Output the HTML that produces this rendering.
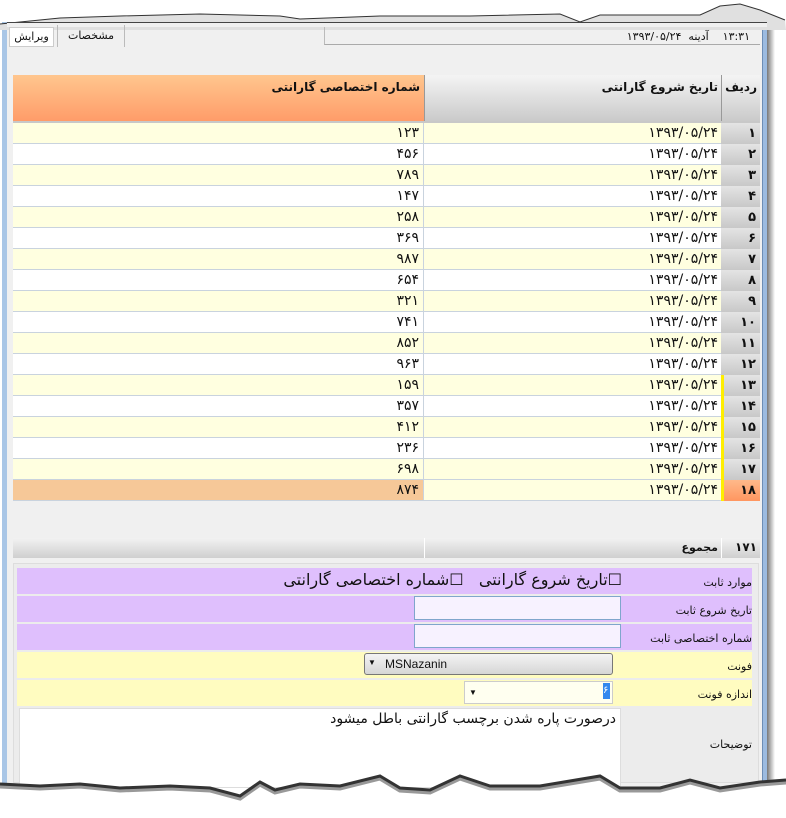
<!DOCTYPE html>
<html><head><meta charset="utf-8"><style>
*{margin:0;padding:0;box-sizing:border-box}
body{width:786px;height:818px;background:#fff;position:relative;overflow:hidden;font-family:"Liberation Sans","Noto Sans CJK SC",sans-serif;color:#111}
.a{position:absolute}
.fa{font-family:"DejaVu Sans","Noto Sans CJK SC",sans-serif;direction:rtl}
.r{position:absolute;left:13px;width:747px;height:21px;border-bottom:1px solid #c9d3de}
.c1{position:absolute;left:0;width:411px;height:20px;text-align:right;padding-right:4px;font-size:14px;line-height:21px;border-right:1px solid #c9d3de}
.c2{position:absolute;left:412px;width:296px;height:20px;text-align:right;padding-right:3px;font-size:14px;line-height:21px}
.c3{position:absolute;left:708px;width:39px;height:21px;background:linear-gradient(#e4e4e4,#c8c8c8);text-align:right;padding-right:4px;font-weight:bold;font-size:13px;line-height:21px}
.lbl{position:absolute;right:34px;font-size:11px;text-align:right}
</style></head><body>
<div class="a" style="left:2px;top:22px;width:5px;height:765px;background:#a9c6e6"></div>
<div class="a" style="left:762px;top:22px;width:5px;height:765px;background:#9cbbe0;border-left:1px solid #6c8db5"></div>
<div class="a" style="left:767px;top:30px;width:8px;height:760px;background:linear-gradient(90deg,#777,#fff)"></div>
<div class="a" style="left:7px;top:22px;width:755px;height:765px;background:#f0f0f0"></div>
<svg class="a" style="left:0;top:0" width="786" height="30"><path d="M0 24 L60 18 L120 16 L200 14 L280 16 L300 19 L380 16 L470 16 L560 14 L580 22 L600 15 L650 15 L700 15 L720 6 L740 4 L760 10 L785 20 L786 30 L0 30Z" fill="#e0e0e0"/><path d="M0 24 L60 18 L120 16 L200 14 L280 16 L300 19 L380 16 L470 16 L560 14 L580 22 L600 15 L650 15 L700 15 L720 6 L740 4 L760 10 L785 20" fill="none" stroke="#333" stroke-width="1"/></svg>
<div class="a" style="left:7px;top:22px;width:760px;height:5px;background:#f0f0f0;border-top:1px solid #444"></div>
<div class="a fa" style="left:9px;top:27px;width:45px;height:20px;background:#fff;border:1px solid #ccc;font-size:11px;text-align:center;line-height:18px">ویرایش</div>
<div class="a fa" style="left:57px;top:25px;width:68px;height:22px;border-left:1px solid #bbb;border-right:1px solid #bbb;font-size:11px;text-align:center;line-height:22px">مشخصات</div>
<div class="a" style="left:324px;top:27px;width:436px;height:18px;border-left:1px solid #bbb;border-bottom:1px solid #aaa"></div>
<div class="a fa" style="left:560px;top:30px;width:190px;font-size:11px;text-align:right;white-space:nowrap">۱۳:۳۱&nbsp;&nbsp;&nbsp; آدینه &nbsp;۱۳۹۳/۰۵/۲۴</div>
<div class="a" style="left:13px;top:75px;width:411px;height:47px;background:linear-gradient(#ffc68e,#ff9b68)"></div>
<div class="a" style="left:424px;top:75px;width:297px;height:47px;background:linear-gradient(#f4f4f4,#c9c9c9);border-left:1px solid #999"></div>
<div class="a" style="left:721px;top:75px;width:39px;height:47px;background:linear-gradient(#f4f4f4,#c9c9c9);border-left:1px solid #999"></div>
<div class="a" style="left:13px;top:121px;width:747px;height:2px;background:#c8c8c8"></div>
<div class="a fa" style="left:200px;top:80px;width:220px;font-size:12px;font-weight:bold;text-align:right">شماره اختصاصی گارانتی</div>
<div class="a fa" style="left:500px;top:80px;width:218px;font-size:12px;font-weight:bold;text-align:right">تاریخ شروع گارانتی</div>
<div class="a fa" style="left:724px;top:80px;width:33px;font-size:12px;font-weight:bold;text-align:right">ردیف</div>
<div class="a fa" style="left:0;top:0;direction:ltr">
<div class="r" style="top:123px;background:#ffffe0"><div class="c1">۱۲۳</div><div class="c2">۱۳۹۳/۰۵/۲۴</div><div class="c3">۱</div></div>
<div class="r" style="top:144px;background:#fff"><div class="c1">۴۵۶</div><div class="c2">۱۳۹۳/۰۵/۲۴</div><div class="c3">۲</div></div>
<div class="r" style="top:165px;background:#ffffe0"><div class="c1">۷۸۹</div><div class="c2">۱۳۹۳/۰۵/۲۴</div><div class="c3">۳</div></div>
<div class="r" style="top:186px;background:#fff"><div class="c1">۱۴۷</div><div class="c2">۱۳۹۳/۰۵/۲۴</div><div class="c3">۴</div></div>
<div class="r" style="top:207px;background:#ffffe0"><div class="c1">۲۵۸</div><div class="c2">۱۳۹۳/۰۵/۲۴</div><div class="c3">۵</div></div>
<div class="r" style="top:228px;background:#fff"><div class="c1">۳۶۹</div><div class="c2">۱۳۹۳/۰۵/۲۴</div><div class="c3">۶</div></div>
<div class="r" style="top:249px;background:#ffffe0"><div class="c1">۹۸۷</div><div class="c2">۱۳۹۳/۰۵/۲۴</div><div class="c3">۷</div></div>
<div class="r" style="top:270px;background:#fff"><div class="c1">۶۵۴</div><div class="c2">۱۳۹۳/۰۵/۲۴</div><div class="c3">۸</div></div>
<div class="r" style="top:291px;background:#ffffe0"><div class="c1">۳۲۱</div><div class="c2">۱۳۹۳/۰۵/۲۴</div><div class="c3">۹</div></div>
<div class="r" style="top:312px;background:#fff"><div class="c1">۷۴۱</div><div class="c2">۱۳۹۳/۰۵/۲۴</div><div class="c3">۱۰</div></div>
<div class="r" style="top:333px;background:#ffffe0"><div class="c1">۸۵۲</div><div class="c2">۱۳۹۳/۰۵/۲۴</div><div class="c3">۱۱</div></div>
<div class="r" style="top:354px;background:#fff"><div class="c1">۹۶۳</div><div class="c2">۱۳۹۳/۰۵/۲۴</div><div class="c3">۱۲</div></div>
<div class="r" style="top:375px;background:#ffffe0"><div class="c1">۱۵۹</div><div class="c2">۱۳۹۳/۰۵/۲۴</div><div class="c3" style="border-left:3px solid #ffee00">۱۳</div></div>
<div class="r" style="top:396px;background:#fff"><div class="c1">۳۵۷</div><div class="c2">۱۳۹۳/۰۵/۲۴</div><div class="c3" style="border-left:3px solid #ffee00">۱۴</div></div>
<div class="r" style="top:417px;background:#ffffe0"><div class="c1">۴۱۲</div><div class="c2">۱۳۹۳/۰۵/۲۴</div><div class="c3" style="border-left:3px solid #ffee00">۱۵</div></div>
<div class="r" style="top:438px;background:#fff"><div class="c1">۲۳۶</div><div class="c2">۱۳۹۳/۰۵/۲۴</div><div class="c3" style="border-left:3px solid #ffee00">۱۶</div></div>
<div class="r" style="top:459px;background:#ffffe0"><div class="c1">۶۹۸</div><div class="c2">۱۳۹۳/۰۵/۲۴</div><div class="c3" style="border-left:3px solid #ffee00">۱۷</div></div>
<div class="r" style="top:480px;background:#ffffe0"><div class="c1" style="background:#f6c898">۸۷۴</div><div class="c2">۱۳۹۳/۰۵/۲۴</div><div class="c3" style="border-left:3px solid #ffee00;background:linear-gradient(#ffb98a,#ff9660)">۱۸</div></div>
</div>
<div class="a" style="left:13px;top:538px;width:747px;height:20px;background:linear-gradient(#f2f2f2,#cfcfcf)"></div>
<div class="a" style="left:424px;top:538px;width:1px;height:20px;background:#fff"></div>
<div class="a" style="left:721px;top:538px;width:1px;height:20px;background:#fff"></div>
<div class="a fa" style="left:600px;top:541px;width:118px;font-size:11px;font-weight:bold;text-align:right">مجموع</div>
<div class="a fa" style="left:724px;top:540px;width:33px;font-size:12px;font-weight:bold;text-align:right">۱۷۱</div>
<div class="a" style="left:13px;top:563px;width:746px;height:220px;background:#ececec;border:1px solid #ddd"></div>
<div class="a" style="left:17px;top:568px;width:735px;height:26px;background:#dfbffd"></div>
<div class="a" style="left:17px;top:596px;width:735px;height:26px;background:#dfbffd"></div>
<div class="a" style="left:17px;top:624px;width:735px;height:26px;background:#dfbffd"></div>
<div class="a" style="left:17px;top:652px;width:735px;height:26px;background:#fffcc0"></div>
<div class="a" style="left:17px;top:680px;width:735px;height:26px;background:#fffcc0"></div>
<div class="a fa lbl" style="top:576px">موارد ثابت</div>
<div class="a fa lbl" style="top:604px">تاریخ شروع ثابت</div>
<div class="a fa lbl" style="top:632px">شماره اختصاصی ثابت</div>
<div class="a fa lbl" style="top:660px">فونت</div>
<div class="a fa lbl" style="top:688px">اندازه فونت</div>
<div class="a fa lbl" style="top:738px">توضیحات</div>
<div class="a fa" style="left:230px;top:570px;width:392px;font-size:16px;text-align:right;white-space:nowrap">☐تاریخ شروع گارانتی &nbsp;&nbsp;☐شماره اختصاصی گارانتی</div>
<div class="a" style="left:414px;top:596px;width:207px;height:24px;background:#f7f2ff;border:1px solid #7fa6cc"></div>
<div class="a" style="left:414px;top:624px;width:207px;height:24px;background:#f7f2ff;border:1px solid #7fa6cc"></div>
<div class="a" style="left:364px;top:653px;width:249px;height:22px;background:linear-gradient(#f4f4f4,#d6d6d6);border:1px solid #777;border-radius:3px;font-size:12px;line-height:20px;padding-left:20px">MSNazanin</div>
<div class="a" style="left:368px;top:658px;font-size:8px">▼</div>
<div class="a" style="left:464px;top:681px;width:149px;height:23px;background:#fffff0;border:1px solid #ccc;font-size:8px;line-height:21px;padding-left:4px">▼</div>
<div class="a" style="left:603px;top:683px;width:7px;height:16px;background:#3388ee;color:#fff;font-size:10px;line-height:16px">۶</div>
<div class="a" style="left:19px;top:708px;width:602px;height:80px;background:#fff;border:1px solid #ddd"></div>
<div class="a fa" style="left:200px;top:711px;width:416px;font-size:14px;text-align:right">درصورت پاره شدن برچسب گارانتی باطل میشود</div>
<svg class="a" style="left:0;top:770px" width="786" height="48"><path d="M0 14 L40 16 L80 14 L120 18 L170 16 L210 18 L240 26 L260 12 L275 20 L300 14 L340 16 L380 6 L400 18 L430 20 L460 6 L490 16 L540 16 L600 6 L620 18 L660 18 L690 10 L720 18 L760 12 L786 10 L786 48 L0 48Z" fill="#fff"/><path d="M0 16 L40 18 L80 16 L120 20 L170 18 L210 20 L240 28 L260 14 L275 22 L300 16 L340 18 L380 8 L400 20 L430 22 L460 8 L490 18 L540 18 L600 8 L620 20 L660 20 L690 12 L720 20 L760 14 L786 12" fill="none" stroke="#999" stroke-width="5"/><path d="M0 14 L40 16 L80 14 L120 18 L170 16 L210 18 L240 26 L260 12 L275 20 L300 14 L340 16 L380 6 L400 18 L430 20 L460 6 L490 16 L540 16 L600 6 L620 18 L660 18 L690 10 L720 18 L760 12 L786 10" fill="none" stroke="#333" stroke-width="3"/></svg>
</body></html>
